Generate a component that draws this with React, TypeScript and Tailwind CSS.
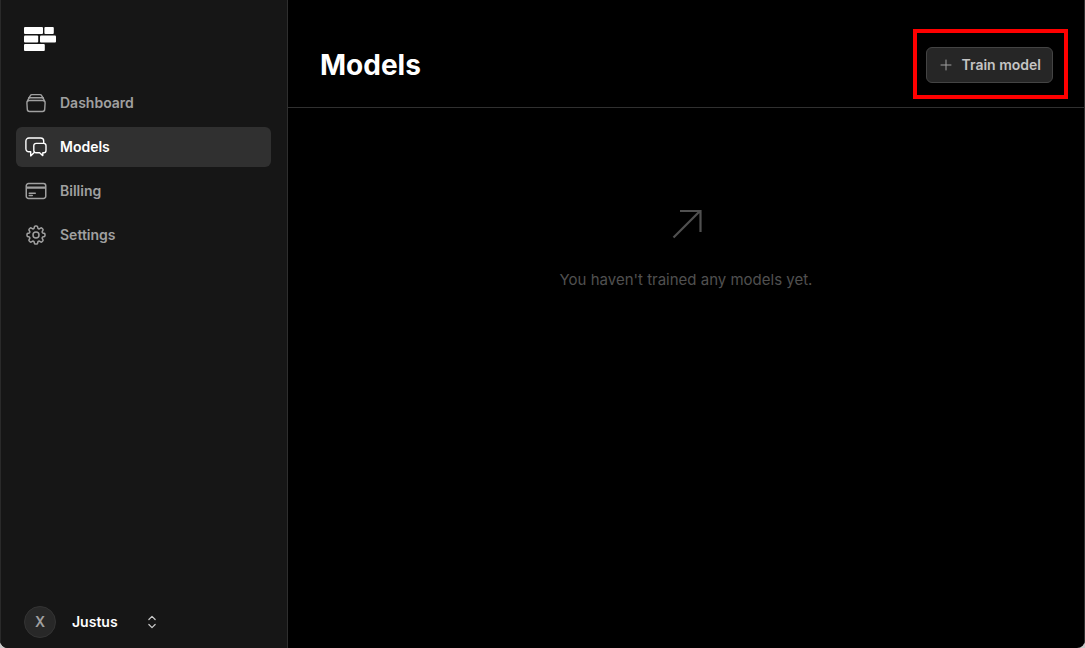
import type { ComponentType, ReactNode } from "react";
import {
  HiOutlineChevronUpDown,
  HiOutlineCog8Tooth,
  HiOutlineCreditCard,
  HiOutlinePlus,
} from "react-icons/hi2";

type IconProps = { className?: string };
type NavItem = { label: string; icon: ComponentType<IconProps>; active?: boolean };

function StrokeIcon({ className, children }: IconProps & { children: ReactNode }) {
  return (
    <svg
      viewBox="0 0 24 24"
      fill="none"
      stroke="currentColor"
      strokeWidth="1.4"
      strokeLinecap="round"
      strokeLinejoin="round"
      className={className}
      aria-hidden="true"
    >
      {children}
    </svg>
  );
}

function StackIcon({ className }: IconProps) {
  return (
    <StrokeIcon className={className}>
      <path d="M5 6.8 6.5 4.4a1.5 1.5 0 0 1 1.3-.8h8.4a1.5 1.5 0 0 1 1.3.8L19 6.8" />
      <path d="M5 6.7h14" />
      <path d="M3.3 10.4 5 6.8M20.7 10.4 19 6.8" />
      <path d="M5.2 9.5h13.6a2.3 2.3 0 0 1 2.3 2.5l-.4 6.4a2.2 2.2 0 0 1-2.2 2.1h-13a2.2 2.2 0 0 1-2.2-2.1L2.9 12a2.3 2.3 0 0 1 2.3-2.5z" />
    </StrokeIcon>
  );
}

function ChatsIcon({ className }: IconProps) {
  return (
    <StrokeIcon className={className}>
      <path d="M19.7 8.2V6a3 3 0 0 0-3-3H4.9a3 3 0 0 0-3 3v7.8a3 3 0 0 0 3 3h1.8v4.1l3.8-3.6" />
      <path d="M12.1 8.4h7.6a2.3 2.3 0 0 1 2.3 2.3v4.8a2.3 2.3 0 0 1-2.3 2.3h-.9v2.8l-3.2-2.8h-3.5a2.3 2.3 0 0 1-2.3-2.3v-4.8a2.3 2.3 0 0 1 2.3-2.3z" />
    </StrokeIcon>
  );
}

const navItems: NavItem[] = [
  { label: "Dashboard", icon: StackIcon },
  { label: "Models", icon: ChatsIcon, active: true },
  { label: "Billing", icon: HiOutlineCreditCard },
  { label: "Settings", icon: HiOutlineCog8Tooth },
];

function Logo() {
  return (
    <svg width="32" height="24" viewBox="0 0 32 24" fill="#ffffff" aria-hidden="true">
      <rect x="0" y="0" width="19" height="7" rx="1" />
      <rect x="20.4" y="0" width="9.4" height="7" rx="1" />
      <rect x="0" y="8.5" width="14.2" height="7" rx="1" />
      <rect x="16" y="8.5" width="16" height="7" rx="1" />
      <rect x="0" y="17" width="20.8" height="7" rx="1" />
    </svg>
  );
}

function NavLink({ label, icon: Icon, active }: NavItem) {
  return (
    <a
      href="#"
      aria-current={active ? "page" : undefined}
      className={
        active
          ? "flex h-10 items-center gap-3 rounded-md bg-[#303030] px-2 text-sm font-semibold text-white"
          : "flex h-10 items-center gap-3 rounded-md px-2 text-sm font-semibold text-[#a0a0a0]"
      }
    >
      <Icon className="size-6" />
      {label}
    </a>
  );
}

function Sidebar() {
  return (
    <aside className="flex w-72 shrink-0 flex-col border-x border-r-[#2e2e2e] border-l-[#2a2a2a] bg-[#161616] pt-[27px] pr-4 pb-[10px] pl-[15px]">
      <a href="#" aria-label="Home" className="mb-8 self-start pl-2">
        <Logo />
      </a>
      <nav className="flex flex-col gap-1">
        {navItems.map((item) => (
          <NavLink key={item.label} {...item} />
        ))}
      </nav>
      <button type="button" className="mt-auto flex items-center self-start pl-2 text-sm font-semibold text-white">
        <span className="flex size-8 items-center justify-center rounded-full border border-[#343434] bg-[#282828] text-[#a0a0a0]">
          X
        </span>
        <span className="ml-4">Justus</span>
        <HiOutlineChevronUpDown className="ml-6 size-5 text-[#c8c8c8]" aria-hidden="true" />
      </button>
    </aside>
  );
}

export default function App() {
  return (
    <div className="min-h-screen bg-[#c8c8c8]">
      <div className="flex min-h-screen overflow-hidden rounded-b-lg bg-black font-['Inter','Liberation_Sans',sans-serif] antialiased">
        <Sidebar />
        <main className="flex min-w-0 flex-1 flex-col border-r border-[#303030]">
          <header className="flex items-center justify-between border-b border-[#303030] pt-[47px] pr-[31px] pb-6 pl-8">
            <h1 className="text-[28px] leading-9 font-bold text-white">Models</h1>
            <div className="relative">
              <button
                type="button"
                className="flex h-9 items-center gap-2 rounded-md border border-[#444444] bg-[#262626] px-[11px] text-sm font-semibold text-[#c4c4c4]"
              >
                <HiOutlinePlus className="size-4 text-[#a0a0a0]" aria-hidden="true" />
                Train model
              </button>
              <div className="pointer-events-none absolute -top-[18px] -right-[15px] -bottom-4 -left-[13px] border-4 border-[#ff0000]" />
            </div>
          </header>
          <section className="flex flex-col items-center gap-5 pt-[92px] text-[#505050]">
            <svg viewBox="0 0 48 48" className="size-12" fill="none" stroke="currentColor" strokeWidth="2.2" aria-hidden="true">
              <path d="M11.5 37.5 38 11M18 11h20.5v21" />
            </svg>
            <p className="text-[15px] leading-6">You haven't trained any models yet.</p>
          </section>
        </main>
      </div>
    </div>
  );
}
